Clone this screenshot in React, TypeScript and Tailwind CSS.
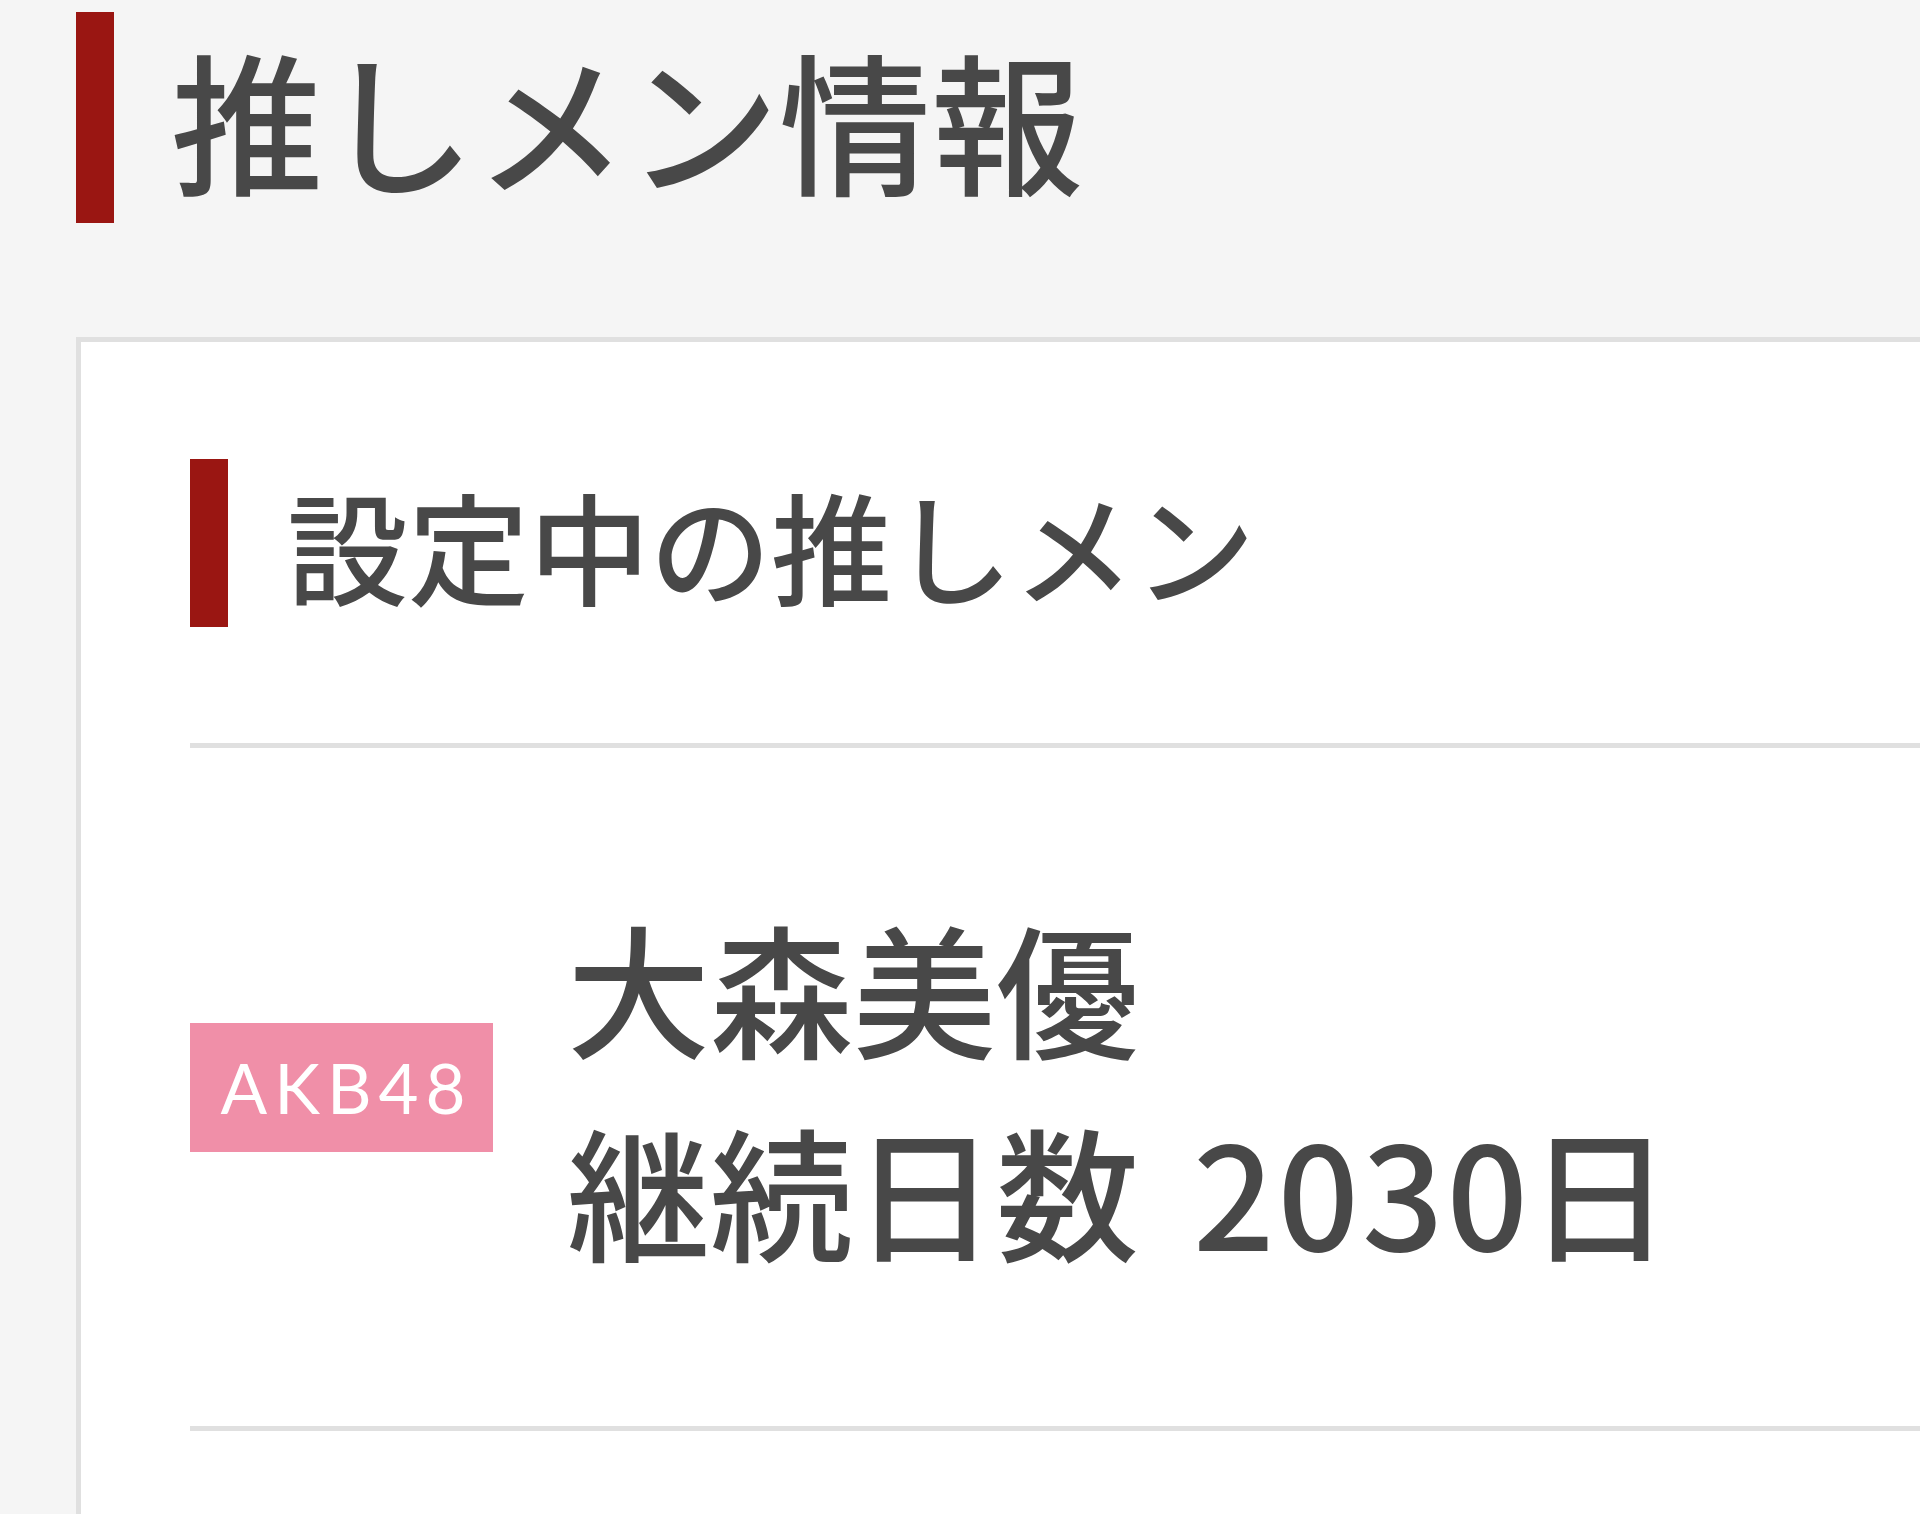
export default function App() {
  return (
    <div
      className="min-h-[1514px] overflow-hidden bg-[#f5f5f5] pl-[76px] pt-[12px] text-[#484848]"
      style={{ fontFamily: '"Noto Sans CJK JP", "Noto Sans", sans-serif' }}
    >
      {/* Page heading */}
      <div className="flex items-center">
        <div className="h-[211px] w-[38px] shrink-0 bg-[#9a1612]" />
        <h1 className="ml-[57px] text-[152px] font-medium leading-none">推しメン情報</h1>
      </div>

      {/* Card */}
      <div className="mt-[114px] border-l-[5px] border-t-[5px] border-[#e0e0e0] bg-white pl-[109px] pt-[117px]">
        <div className="flex items-center">
          <div className="h-[168px] w-[38px] shrink-0 bg-[#9a1612]" />
          <h2 className="ml-[59px] text-[121px] font-medium leading-none">設定中の推しメン</h2>
        </div>

        <div className="mt-[116px] h-[5px] bg-[#e0e0e0]" />

        <div className="flex items-center py-[136px]">
          <div className="flex h-[129px] w-[303px] shrink-0 items-center justify-center bg-[#f08fa8]">
            <span
              className="pl-[10px] text-[69px] leading-none tracking-[7px] text-white"
              style={{ fontFamily: 'Lato, "Liberation Sans", sans-serif' }}
            >
              AKB48
            </span>
          </div>
          <div className="ml-[74px] text-[143px] font-medium leading-[203px]">
            <p>大森美優</p>
            <p>
              継続日数<span className="ml-[54px] tracking-[3px]">203</span>0日
            </p>
          </div>
        </div>

        <div className="h-[5px] bg-[#e0e0e0]" />
        <div className="h-[200px]" />
      </div>
    </div>
  );
}
